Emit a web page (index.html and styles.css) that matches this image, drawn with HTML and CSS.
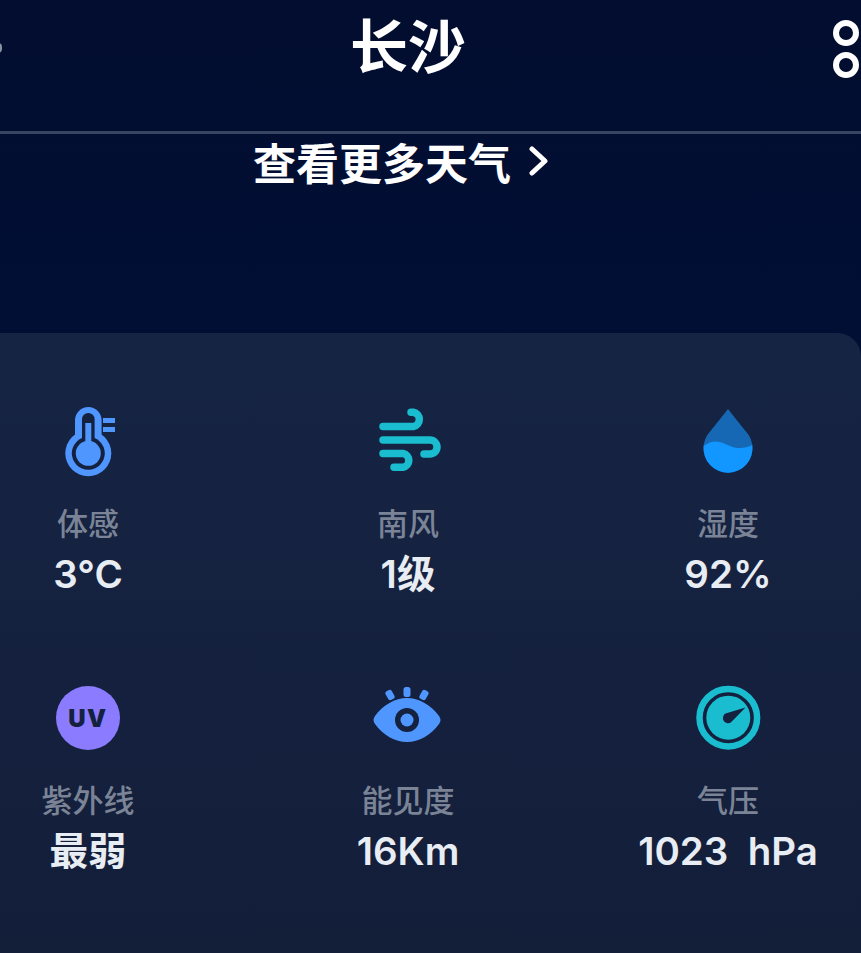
FILE: index.html
```html
<!DOCTYPE html>
<html lang="zh-CN">
<head>
    <meta charset="UTF-8">
    <meta name="viewport" content="width=device-width, initial-scale=1.0">
    <title>长沙天气</title>
    <link rel="stylesheet" href="styles.css">
</head>
<body>

    <div class="page">
        <header class="top-bar">
            <div class="top-bar-left"><span class="back-tip"></span></div>
            <h1 class="city">长沙</h1>
            <div class="menu">
                <span class="menu-ring"></span>
                <span class="menu-ring"></span>
            </div>
        </header>

        <a href="#" class="more-link">
            <span>查看更多天气</span>
            <svg class="more-arrow" viewBox="0 0 20 30" width="20" height="30"><path d="M3 3 L16 15 L3 27" /></svg>
        </a>

        <section class="details">
            <div class="detail">
                <svg class="detail-icon" viewBox="0 0 72 72">
                    <rect class="blue" x="23" y="2" width="26.6" height="40" rx="13.3" />
                    <circle class="blue" cx="36.3" cy="48.3" r="23" />
                    <rect class="gap" x="30" y="8" width="12.6" height="40" rx="6.3" />
                    <circle class="gap" cx="36.3" cy="48.3" r="16.5" />
                    <rect class="blue" x="33.3" y="18" width="6" height="25" />
                    <circle class="blue" cx="36.3" cy="48.3" r="12.5" />
                    <rect class="blue" x="51" y="13" width="12" height="5" />
                    <rect class="blue" x="51" y="22" width="12" height="5" />
                </svg>
                <div class="detail-label">体感</div>
                <div class="detail-value">3°C</div>
            </div>
            <div class="detail">
                <svg class="detail-icon" viewBox="0 0 72 72">
                    <g class="wind">
                        <path d="M11 21.5 H41.3 A7.2 7.2 0 0 0 41.3 7.3 H39" />
                        <path d="M11 35 H58 A7 7 0 0 1 58 49 H52" />
                        <path d="M11 48.5 H31 A7 7 0 0 1 31 62.3 H22" />
                    </g>
                </svg>
                <div class="detail-label">南风</div>
                <div class="detail-value">1级</div>
            </div>
            <div class="detail">
                <svg class="detail-icon" viewBox="0 0 72 72">
                    <path class="drop-top" d="M36 4 C33 8 24 19 18.5 26 A24.5 24.5 0 1 0 53.5 26 C48 19 39 8 36 4 Z" />
                    <path class="drop-water" d="M11.6 41 C22 33 30 37 38 41 C46 44.5 54 43 60.3 40 A24.5 24.5 0 1 1 11.6 41 Z" />
                </svg>
                <div class="detail-label">湿度</div>
                <div class="detail-value">92%</div>
            </div>
            <div class="detail">
                <div class="uv-badge">UV</div>
                <div class="detail-label">紫外线</div>
                <div class="detail-value">最弱</div>
            </div>
            <div class="detail">
                <svg class="detail-icon" viewBox="0 0 72 72">
                    <path class="blue" d="M3 34 C11 23 23 16 35 16 C47 16 59 23 67 34 C69 36.5 69 39.5 67 42 C59 53 47 60 35 60 C23 60 11 53 3 42 C1 39.5 1 36.5 3 34 Z" />
                    <circle class="gap" cx="35" cy="38" r="12" />
                    <circle class="blue" cx="35" cy="38" r="6.5" />
                    <rect class="blue" x="31.5" y="5" width="7" height="10" rx="2.5" />
                    <rect class="blue" x="14.5" y="8" width="7" height="10" rx="2.5" transform="rotate(-30 18 13)" />
                    <rect class="blue" x="48.5" y="8" width="7" height="10" rx="2.5" transform="rotate(30 52 13)" />
                </svg>
                <div class="detail-label">能见度</div>
                <div class="detail-value">16Km</div>
            </div>
            <div class="detail">
                <svg class="detail-icon" viewBox="0 0 72 72">
                    <circle class="gauge-ring" cx="36.3" cy="35.7" r="28.8" />
                    <circle class="gauge-face" cx="36.3" cy="35.7" r="22" />
                    <path class="gap" d="M53.5 25.5 L38.8 40.5 A5 5 0 0 1 33.5 31.5 Z" />
                </svg>
                <div class="detail-label">气压</div>
                <div class="detail-value">1023&nbsp; hPa</div>
            </div>
        </section>
    </div>

</body>
</html>
```

FILE: styles.css
```css
/* General Styles */
html, body {
    height: 100%;
}

body {
    margin: 0;
    overflow: hidden;
    background: linear-gradient(#020d2f, #010f35 340px);
    color: #fff;
    font-family: 'Inter', 'Noto Sans CJK SC', sans-serif;
}

a {
    color: #fff;
    text-decoration: none;
}

/* the screenshot is cut off on the left, the real page is wider */
.page {
    margin-left: -72px;
    width: 933px;
}

/* Top bar */
.top-bar {
    display: grid;
    grid-template-columns: 74px 1fr 74px;
    align-items: center;
    height: 131px;
    border-bottom: 3px solid #394362;
}

.top-bar-left {
    display: flex;
    justify-content: flex-end;
    padding-bottom: 36px;
}

.back-tip {
    width: 4px;
    height: 10px;
    background: #8b92a5;
    border-radius: 0 5px 5px 0;
}

.city {
    margin: 0 0 46px;
    padding-left: 27px;
    text-align: center;
    font-family: 'Noto Sans CJK SC', sans-serif;
    font-size: 58px;
    font-weight: 700;
    line-height: 80px;
}

.menu {
    display: flex;
    flex-direction: column;
    gap: 6px;
    margin-left: 46px;
    padding-bottom: 33px;
}

.menu-ring {
    box-sizing: border-box;
    width: 26px;
    height: 26px;
    border: 6px solid #fff;
    border-radius: 50%;
}

/* More link */
.more-link {
    display: flex;
    align-items: center;
    gap: 18px;
    height: 54px;
    padding-left: 325px;
    font-family: 'Noto Sans CJK SC', sans-serif;
    font-size: 43px;
    font-weight: 700;
}

.more-arrow path {
    fill: none;
    stroke: #fff;
    stroke-width: 5;
    stroke-linecap: round;
    stroke-linejoin: round;
}

/* Detail card */
.details {
    display: grid;
    grid-template-columns: repeat(3, 320px);
    row-gap: 83px;
    align-content: start;
    box-sizing: border-box;
    min-height: 620px;
    margin-top: 145px;
    padding-top: 72px;
    border-radius: 24px 24px 0 0;
    background: linear-gradient(#162444, #131e39);
}

.detail {
    display: flex;
    flex-direction: column;
    align-items: center;
}

.detail-icon {
    display: block;
    width: 72px;
    height: 72px;
}

.detail-label {
    margin-top: 23px;
    font-family: 'Noto Sans CJK SC', sans-serif;
    font-size: 31px;
    font-weight: 500;
    line-height: 44px;
    color: #7b8496;
}

.detail-value {
    margin-top: 5px;
    font-size: 38.5px;
    font-weight: 600;
    line-height: 50px;
    color: #e8ecf3;
    white-space: nowrap;
}

/* Icons */
.blue {
    fill: #4f96ff;
}

.gap {
    fill: #14213f;
}

.wind path {
    fill: none;
    stroke: #1abdd0;
    stroke-width: 7.5;
    stroke-linecap: round;
}

.drop-top {
    fill: #1668b4;
}

.drop-water {
    fill: #1296ff;
}

.gauge-ring {
    fill: none;
    stroke: #1abdd0;
    stroke-width: 6.5;
}

.gauge-face {
    fill: #1abdd0;
}

.uv-badge {
    display: flex;
    align-items: center;
    justify-content: center;
    width: 64px;
    height: 64px;
    margin: 4px 0;
    border-radius: 50%;
    background: #8b7cff;
    color: #14213f;
    font-size: 24px;
    font-weight: 900;
    letter-spacing: 1.5px;
}
```
